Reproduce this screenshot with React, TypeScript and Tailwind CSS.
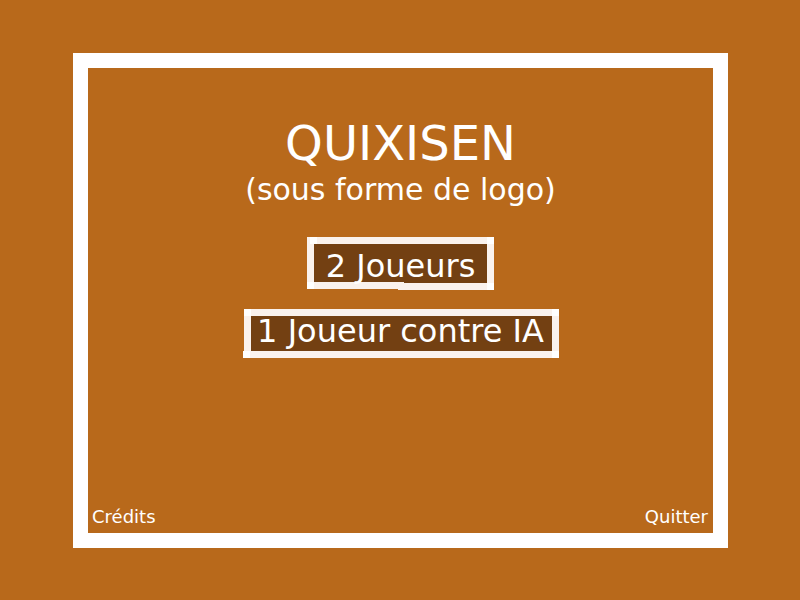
function Bar({ className }: { className: string }) {
  return <span aria-hidden="true" className={`absolute bg-[#faf2ed] ${className}`} />;
}

function Corner({ className }: { className: string }) {
  return <span aria-hidden="true" className={`absolute size-[7px] bg-white ${className}`} />;
}

export default function App() {
  return (
    <main className="flex min-h-screen flex-col bg-[#b8691b] pt-[53px] pr-[72px] pb-[52px] pl-[73px] font-['DejaVu_Sans',sans-serif] text-white">
      <div className="flex grow flex-col border-[15px] border-white">
        <header className="flex flex-col items-center pt-[47px]">
          <h1 className="text-[48px] leading-[56px]">QUIXISEN</h1>
          <p className="text-[30px] leading-[38px]">(sous forme de logo)</p>
        </header>
        <nav className="flex grow flex-col items-center gap-[19px] pt-[28px]">
          <button className="relative h-[53px] w-[187px] bg-[#734012] pt-1 text-[32px] leading-[38px] whitespace-nowrap">
            <Bar className="top-0 left-0 h-[52px] w-[7px]" />
            <Bar className="inset-y-0 right-0 w-[7px]" />
            <Bar className="inset-x-0 top-0 h-[7px]" />
            <span aria-hidden="true" className="absolute bottom-0 left-0 h-px w-[91px] bg-[#b8691b]" />
            <Bar className="right-0 bottom-0 h-[7px] w-[96px]" />
            <Bar className="bottom-px left-0 h-[7px] w-[97px]" />
            <Corner className="top-0 left-[3px]" />
            <Corner className="top-0 right-0" />
            <Corner className="right-0 bottom-0" />
            <Corner className="bottom-px left-0" />
            <span className="relative">2 Joueurs</span>
          </button>
          <button className="relative ml-px h-[49px] w-[316px] pr-px pb-[6px] text-[32px] leading-[30px] whitespace-nowrap">
            <span aria-hidden="true" className="absolute inset-y-0 right-0 left-px bg-[#734012]" />
            <Bar className="inset-y-0 left-px w-[7px]" />
            <Bar className="inset-y-0 right-0 w-[7px]" />
            <Bar className="top-0 right-0 left-px h-[7px]" />
            <Bar className="inset-x-0 bottom-0 h-[7px]" />
            <Corner className="top-0 left-px" />
            <Corner className="top-0 right-0" />
            <Corner className="right-0 bottom-0" />
            <Corner className="bottom-0 left-0" />
            <span className="relative">1 Joueur contre IA</span>
          </button>
        </nav>
        <footer className="flex justify-between pr-[5px] pb-1 pl-1 text-[18px] leading-6">
          <button>Crédits</button>
          <button>Quitter</button>
        </footer>
      </div>
    </main>
  );
}
